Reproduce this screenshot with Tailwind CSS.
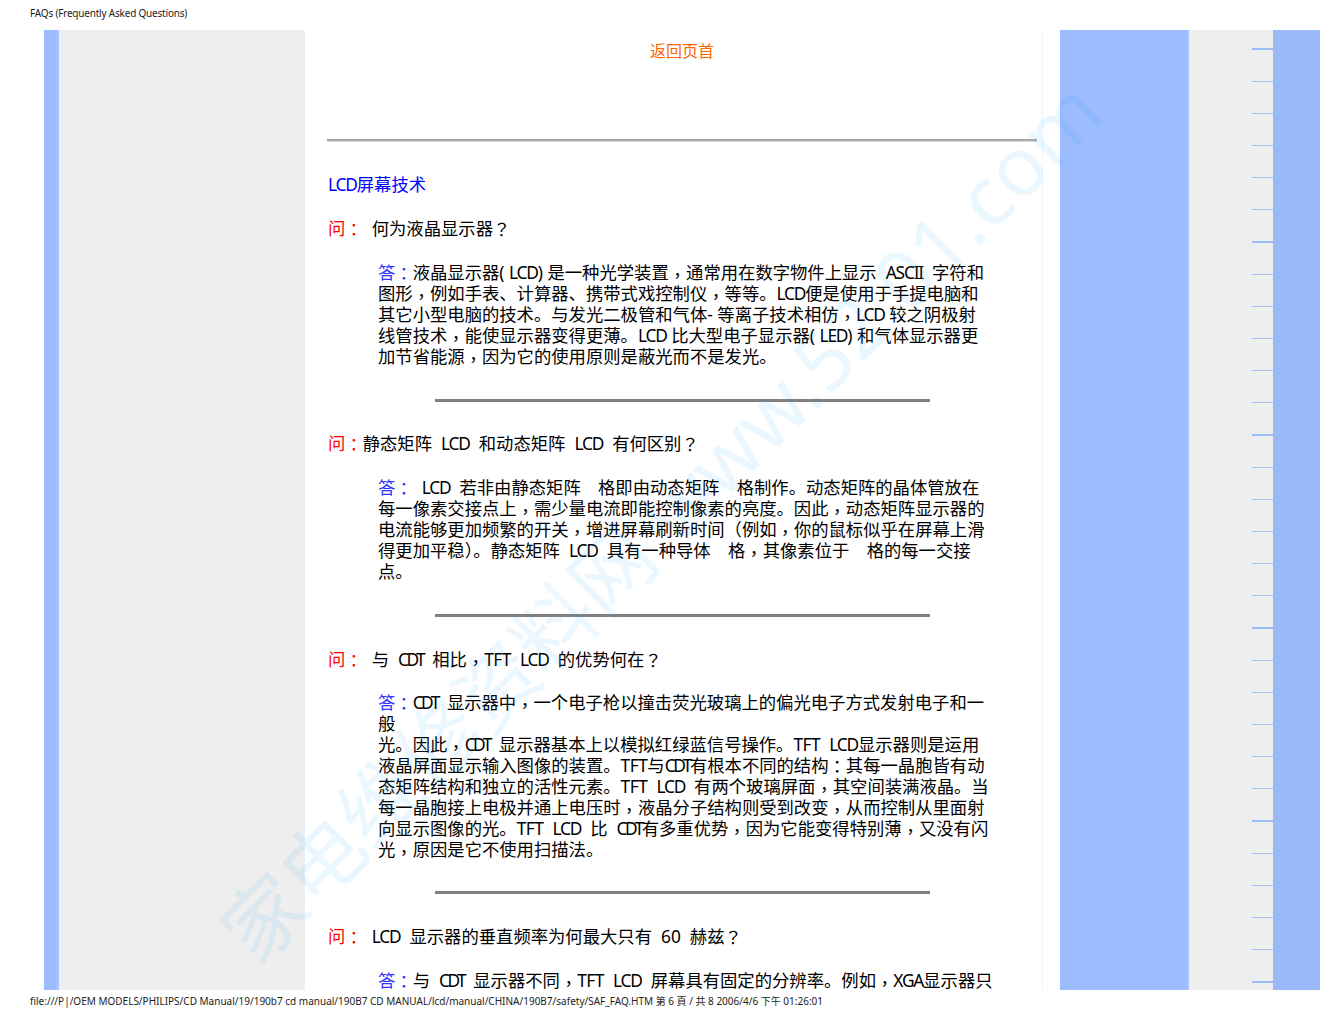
<!DOCTYPE html>
<html lang="zh-CN">
<head>
    <meta charset="UTF-8">
    <title>FAQs (Frequently Asked Questions)</title>
    <script src="https://cdn.jsdelivr.net/npm/@tailwindcss/browser@4"></script>
</head>
<body class="relative w-[1320px] h-[1020px] overflow-hidden bg-white font-['Noto_Sans','Noto_Sans_CJK_SC',sans-serif] text-black">

    <!-- page header -->
    <div class="h-[30px] pl-[30px] pt-[5px] text-[10px] leading-[16px] text-[#222] tracking-[-0.2px]">FAQs (Frequently Asked Questions)</div>

    <!-- main band -->
    <div class="flex h-[960px]">
        <div class="w-[44px] bg-white"></div>
        <div class="w-[15px] bg-[#9cbcfd] border-r-[3px] border-[#a6c3ff]"></div>
        <div class="w-[246px] bg-[#eeeeee] border-r border-[#eaf0fb]"></div>

        <!-- content -->
        <div class="w-[755px] relative pl-[22px] text-[17.33px] leading-[21px]">
            <div class="absolute top-0 bottom-0 left-[737px] w-px bg-[#f2f5fd]"></div>
            <div class="w-[710px] pt-[11px] text-center text-[16px] text-[#ff6600]">返回页首</div>
            <div class="w-[710px] h-[3px] mt-[77px] bg-[#aaaaaa] border-b border-[#d8d8d8]"></div>

            <div data-t class="mt-[32px] pl-px text-[#0000ff]">LCD屏幕技术</div>

            <div class="mt-[23px] pl-px whitespace-pre"><span data-t class="text-[#ff0000]">问：</span><span data-t>  何为液晶显示器？</span></div>
            <div class="mt-[23px] ml-[51px] whitespace-pre"><span data-t class="text-[#3333ff]">答：</span><span data-t>液晶显示器( LCD) 是一种光学装置，通常用在数字物件上显示  ASCII  字符和
图形，例如手表、计算器、携带式戏控制仪，等等。LCD便是使用于手提电脑和
其它小型电脑的技术。与发光二极管和气体- 等离子技术相仿，LCD 较之阴极射
线管技术，能使显示器变得更薄。LCD 比大型电子显示器( LED) 和气体显示器更
加节省能源，因为它的使用原则是蔽光而不是发光。</span></div>
            <div class="w-[495px] h-[3px] ml-[108px] mt-[32px] bg-[#808080]"></div>

            <div class="mt-[31px] pl-px whitespace-pre"><span data-t class="text-[#ff0000]">问：</span><span data-t>静态矩阵  LCD  和动态矩阵  LCD  有何区别？</span></div>
            <div class="mt-[23px] ml-[51px] whitespace-pre"><span data-t class="text-[#3333ff]">答：</span><span data-t>  LCD  若非由静态矩阵　格即由动态矩阵　格制作。动态矩阵的晶体管放在
每一像素交接点上，需少量电流即能控制像素的亮度。因此，动态矩阵显示器的
电流能够更加频繁的开关，增进屏幕刷新时间（例如，你的鼠标似乎在屏幕上滑
得更加平稳）。静态矩阵  LCD  具有一种导体　格，其像素位于　格的每一交接
点。</span></div>
            <div class="w-[495px] h-[3px] ml-[108px] mt-[32px] bg-[#808080]"></div>

            <div class="mt-[32px] pl-px whitespace-pre"><span data-t class="text-[#ff0000]">问：</span><span data-t>  与  CDT  相比，TFT  LCD  的优势何在？</span></div>
            <div class="mt-[22px] ml-[51px] whitespace-pre"><span data-t class="text-[#3333ff]">答：</span><span data-t>CDT  显示器中，一个电子枪以撞击荧光玻璃上的偏光电子方式发射电子和一
般
光。因此，CDT  显示器基本上以模拟红绿蓝信号操作。TFT  LCD显示器则是运用
液晶屏面显示输入图像的装置。TFT与CDT有根本不同的结构：其每一晶胞皆有动
态矩阵结构和独立的活性元素。TFT  LCD  有两个玻璃屏面，其空间装满液晶。当
每一晶胞接上电极并通上电压时，液晶分子结构则受到改变，从而控制从里面射
向显示图像的光。TFT  LCD  比  CDT有多重优势，因为它能变得特别薄，又没有闪
光，原因是它不使用扫描法。</span></div>
            <div class="w-[495px] h-[3px] ml-[108px] mt-[31px] bg-[#808080]"></div>

            <div class="mt-[32px] pl-px whitespace-pre"><span data-t class="text-[#ff0000]">问：</span><span data-t>  LCD  显示器的垂直频率为何最大只有  60  赫兹？</span></div>
            <div class="mt-[23px] ml-[51px] whitespace-pre"><span data-t class="text-[#3333ff]">答：</span><span data-t>与  CDT  显示器不同，TFT  LCD  屏幕具有固定的分辨率。例如，XGA显示器只</span></div>
        </div>

        <div class="w-[129px] bg-[#9cbcff] border-r-2 border-[#a6c3ff]"></div>

        <!-- ruler column -->
        <div id="ticks" class="w-[84px] bg-[#eeeeee] pl-[63px] pt-[18px] flex flex-col overflow-hidden"></div>
        <div class="w-[47px] bg-[#9ab9f8]"></div>
    </div>

    <!-- page footer -->
    <div class="pl-[30px] pt-[3px] text-[10px] leading-[16px] text-[#222] whitespace-nowrap">file:///P|/OEM MODELS/PHILIPS/CD Manual/19/190b7 cd manual/190B7 CD MANUAL/lcd/manual/CHINA/190B7/safety/SAF_FAQ.HTM 第 6 頁 / 共 8 2006/4/6 下午 01:26:01</div>

    <!-- watermark -->
    <div class="absolute left-[660px] top-[520px] w-0 h-0 pointer-events-none">
        <div class="absolute left-[-640px] top-[-60px] w-[1280px] text-center -rotate-45 whitespace-nowrap text-[82px] leading-[120px] text-[#0096ff]/8">家电维修资料网 www.52 01.com</div>
    </div>

    <script>
        // ruler ticks, every sixth one is thicker and the last one too
        const ticks = document.getElementById('ticks');
        for (let i = 0; i <= 29; i++) {
            const thick = i % 6 === 0 || i === 29;
            const row = document.createElement('div');
            row.className = thick ? 'h-[33px] shrink-0' : 'h-[32px] shrink-0';
            const bar = document.createElement('div');
            bar.className = thick ? 'h-[2px] bg-[#9cbcf8]' : 'h-px bg-[#a4c0f4]';
            row.appendChild(bar);
            ticks.appendChild(row);
        }

        // the source squeezes latin words and centres the fullwidth punctuation
        document.querySelectorAll('[data-t]').forEach(el => {
            el.innerHTML = el.textContent
                .replace(/[A-Za-z]+/g, word => {
                    if (word === 'CDT') return '<span class="tracking-[-2.5px]">CDT</span>';
                    if (word === 'TFT') return '<span class="tracking-[-0.5px]">TFT</span>';
                    return '<span class="tracking-[-1.2px]">' + word + '</span>';
                })
                .replace(/，/g, '<span lang="zh-TW" class="relative top-[3px] leading-[0] font-[Noto_Sans_CJK_TC]">，</span>')
                .replace(/[：？]/g, '<span lang="zh-TW" class="relative top-px leading-[0] font-[Noto_Sans_CJK_TC]">$&</span>');
        });
    </script>
</body>
</html>
